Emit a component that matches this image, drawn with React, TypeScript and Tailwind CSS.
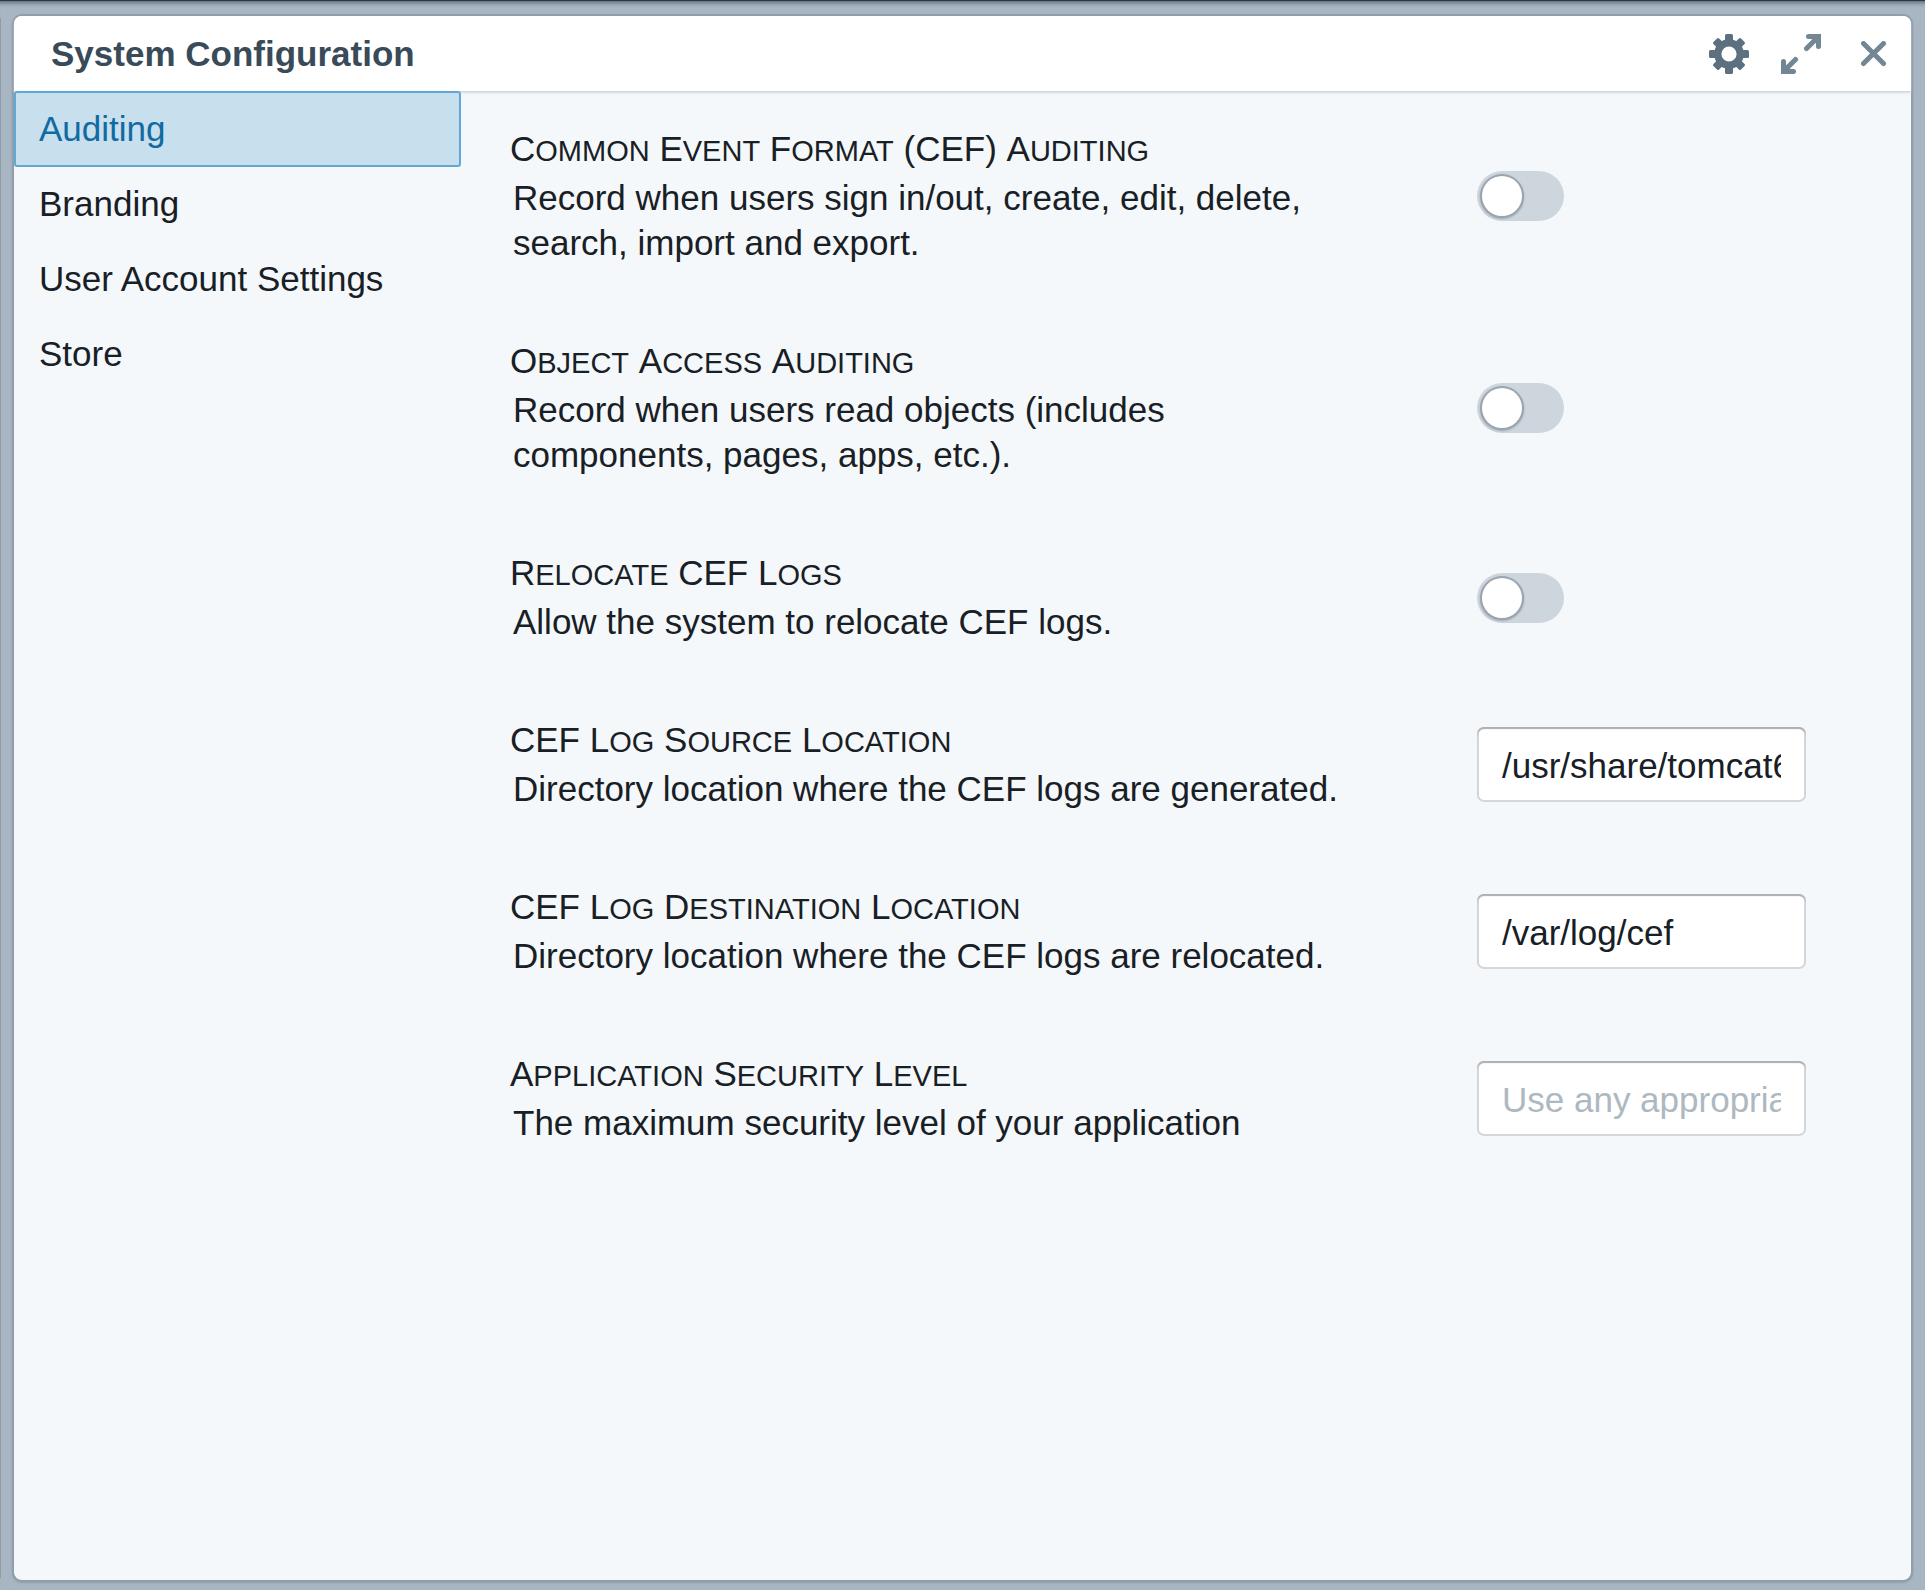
import { Fragment, useState } from "react";

type Setting = {
  id: string;
  label: string;
  description: string;
  kind: "toggle" | "text";
  value?: string;
  placeholder?: string;
};

const sections = ["Auditing", "Branding", "User Account Settings", "Store"];

const settings: Setting[] = [
  {
    id: "cef-auditing",
    label: "Common Event Format (CEF) Auditing",
    description: "Record when users sign in/out, create, edit, delete, search, import and export.",
    kind: "toggle",
  },
  {
    id: "object-access",
    label: "Object Access Auditing",
    description: "Record when users read objects (includes components, pages, apps, etc.).",
    kind: "toggle",
  },
  {
    id: "relocate-logs",
    label: "Relocate CEF Logs",
    description: "Allow the system to relocate CEF logs.",
    kind: "toggle",
  },
  {
    id: "log-source",
    label: "CEF Log Source Location",
    description: "Directory location where the CEF logs are generated.",
    kind: "text",
    value: "/usr/share/tomcat6",
  },
  {
    id: "log-destination",
    label: "CEF Log Destination Location",
    description: "Directory location where the CEF logs are relocated.",
    kind: "text",
    value: "/var/log/cef",
  },
  {
    id: "security-level",
    label: "Application Security Level",
    description: "The maximum security level of your application",
    kind: "text",
    placeholder: "Use any appropriate",
  },
];

function GearIcon() {
  return (
    <svg viewBox="-20 -20 40 40" className="size-10" aria-hidden="true">
      <g fill="#5c7080">
        {[0, 90, 180, 270].map((angle) => (
          <rect key={angle} x="-4" y="-20" width="8" height="11" rx="1.5" transform={`rotate(${angle})`} />
        ))}
        {[45, 135, 225, 315].map((angle) => (
          <rect key={angle} x="-4" y="-19.5" width="8" height="11" rx="1.5" transform={`rotate(${angle})`} />
        ))}
      </g>
      <circle r="11.2" fill="none" stroke="#5c7080" strokeWidth="7.2" />
    </svg>
  );
}

function ExpandIcon() {
  return (
    <svg
      viewBox="0 0 40 40"
      className="size-10"
      fill="none"
      stroke="#738694"
      strokeWidth="5"
      strokeLinecap="round"
      aria-hidden="true"
    >
      <path d="M27.5 2.5H37.5V12.5M36.5 3.5L25.5 14.5" />
      <path d="M12.5 37.5H2.5V27.5M3.5 36.5L14.5 25.5" />
      <path d="M31 4H36V9ZM9 36H4V31Z" strokeWidth="2" fill="#738694" />
    </svg>
  );
}

function CloseIcon() {
  return (
    <svg
      viewBox="0 0 26 26"
      className="size-[26px]"
      fill="none"
      stroke="#738694"
      strokeWidth="5"
      strokeLinecap="round"
      aria-hidden="true"
    >
      <path d="M2.5 2.5L22.5 22.5M22.5 2.5L2.5 22.5" />
    </svg>
  );
}

// Capitals at full size, the rest of each word in smaller capitals.
function SmallCaps({ text }: { text: string }) {
  return text.split(" ").map((word, index) => (
    <Fragment key={index}>
      {index > 0 && " "}
      {word === word.toUpperCase() ? (
        word
      ) : (
        <span className="inline-block text-[29px] uppercase first-letter:text-[35px]">{word}</span>
      )}
    </Fragment>
  ));
}

function SettingRow({ setting }: { setting: Setting }) {
  return (
    <div className="flex items-center justify-between gap-10">
      <div className="max-w-[840px]">
        <label htmlFor={setting.id} className="block h-12 leading-[43px]">
          <SmallCaps text={setting.label} />
        </label>
        <p id={`${setting.id}-hint`} className="pl-[3px] leading-[45px]">
          {setting.description}
        </p>
      </div>
      <div className="flex w-[329px] shrink-0">
        {setting.kind === "toggle" ? (
          <input
            id={setting.id}
            type="checkbox"
            role="switch"
            aria-describedby={`${setting.id}-hint`}
            className="h-[50px] w-[87px] cursor-pointer appearance-none rounded-full bg-[#ced6dd] p-[5px] before:block before:size-10 before:rounded-full before:bg-white before:shadow-[0_0_0_2px_#9aa5af,0_1px_2px_2px_#9aa5af] checked:bg-[#137cbd] checked:before:ml-auto"
          />
        ) : (
          <input
            id={setting.id}
            type="text"
            defaultValue={setting.value}
            placeholder={setting.placeholder}
            aria-describedby={`${setting.id}-hint`}
            className="h-[75px] w-full rounded-[7px] bg-white px-[25px] pt-[3px] shadow-[inset_0_2px_1px_#adb0b3,inset_0_0_0_2px_#d5d8da] outline-none placeholder:text-[#adb8c1] focus:ring-2 focus:ring-[#137cbd]"
          />
        )}
      </div>
    </div>
  );
}

export default function App() {
  const [active, setActive] = useState("Auditing");

  return (
    <div className="flex min-h-screen border-t border-[#293742] bg-[#a7b6c2] font-['Liberation_Sans',Arial,sans-serif] text-[35px] text-[#182026] shadow-[inset_0_6px_4px_-4px_#5c6b78]">
      <div className="mt-[17px] mb-[12px] w-px shrink-0 bg-[#8e9ca8]" />
      <section className="mt-[15px] mr-[14px] mb-[10px] ml-[13px] flex min-w-0 flex-1 flex-col rounded-lg bg-[#f5f8fa] shadow-[0_0_0_2px_#909eaa,0_1px_2px_2px_#909eaa]">
        <header className="z-10 flex h-[75px] shrink-0 items-center justify-between rounded-t-lg bg-white pt-px pr-6 pl-[37px] shadow-[0_2px_2px_#d3dade]">
          <h1 className="pt-px font-bold text-[#394b59]">System Configuration</h1>
          <div className="flex items-center">
            <button type="button" aria-label="Settings" className="mr-8">
              <GearIcon />
            </button>
            <button type="button" aria-label="Expand" className="mr-10">
              <ExpandIcon />
            </button>
            <button type="button" aria-label="Close">
              <CloseIcon />
            </button>
          </div>
        </header>
        <div className="flex flex-1">
          <nav aria-label="Configuration sections" className="z-20 flex w-[447px] shrink-0 flex-col">
            {sections.map((name) => (
              <button
                key={name}
                type="button"
                aria-current={active === name ? "page" : undefined}
                onClick={() => setActive(name)}
                className={
                  active === name
                    ? "-mb-px h-[76px] rounded-[3px] border-2 border-[#62a8d5] bg-[#c8dfed] pl-[23px] text-left text-[#106ba3]"
                    : "-mb-px h-[76px] border-2 border-transparent pl-[23px] text-left"
                }
              >
                {name}
              </button>
            ))}
          </nav>
          <main className="flex min-w-0 flex-1 flex-col gap-[74px] pt-9 pr-[105px] pl-[49px]">
            {settings.map((setting) => (
              <SettingRow key={setting.id} setting={setting} />
            ))}
          </main>
        </div>
      </section>
    </div>
  );
}
